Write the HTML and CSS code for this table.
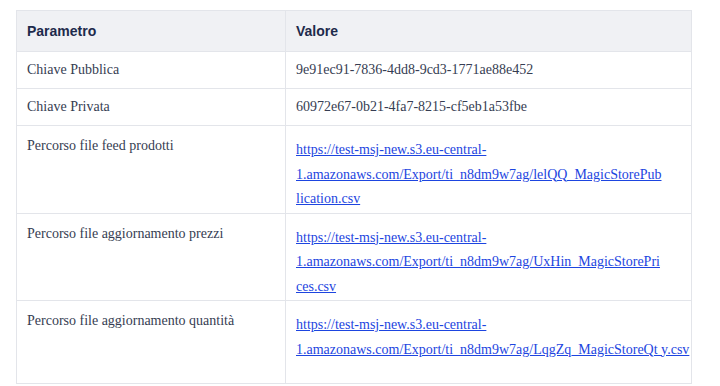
FILE: index.html
```html
<!DOCTYPE html>
<html lang="it">
<head>
    <meta charset="UTF-8">
    <meta name="viewport" content="width=device-width, initial-scale=1.0">
    <title>Parametri</title>
    <link rel="stylesheet" href="styles.css">
</head>
<body>
    <table class="params">
        <thead>
            <tr>
                <th class="col-name">Parametro</th>
                <th>Valore</th>
            </tr>
        </thead>
        <tbody>
            <tr>
                <td>Chiave Pubblica</td>
                <td>9e91ec91-7836-4dd8-9cd3-1771ae88e452</td>
            </tr>
            <tr>
                <td>Chiave Privata</td>
                <td>60972e67-0b21-4fa7-8215-cf5eb1a53fbe</td>
            </tr>
            <tr class="link-row">
                <td>Percorso file feed prodotti</td>
                <td class="link-cell"><a href="#">https://test-msj-new.s3.eu-central-1.amazonaws.com/Export/ti_n8dm9w7ag/lelQQ_MagicStorePublication.csv</a></td>
            </tr>
            <tr class="link-row">
                <td>Percorso file aggiornamento prezzi</td>
                <td class="link-cell"><a href="#">https://test-msj-new.s3.eu-central-1.amazonaws.com/Export/ti_n8dm9w7ag/UxHin_MagicStorePrices.csv</a></td>
            </tr>
            <tr class="link-row last">
                <td>Percorso file aggiornamento quantità</td>
                <td class="link-cell"><a href="#">https://test-msj-new.s3.eu-central-<span class="nowrap">1.amazonaws.com/Export/ti_n8dm9w7ag/LqgZq_MagicStoreQt y.csv</span></a></td>
            </tr>
        </tbody>
    </table>
</body>
</html>
```

FILE: styles.css
```css
body {
    margin: 10px 16px;
    background-color: #ffffff;
}
.params {
    width: 676px;
    border-collapse: collapse;
    table-layout: fixed;
    font-family: 'Liberation Serif', serif;
    font-size: 14px;
    color: #363d52;
}
.params th,
.params td {
    border: 1px solid #e3e5ea;
    padding: 6px 10px;
    text-align: left;
    vertical-align: top;
    line-height: 24px;
}
.params th {
    background-color: #f0f1f4;
    font-family: 'Liberation Sans', sans-serif;
    font-weight: bold;
    color: #1d2a4b;
    padding: 8px 10px;
}
.params .col-name {
    width: 248px;
}
.link-cell {
    overflow-wrap: anywhere;
}
.link-row td {
    padding-top: 8px;
}
.link-row .link-cell {
    padding-top: 12px;
    padding-bottom: 1px;
    padding-right: 29px;
    line-height: 24.5px;
}
.link-row.last td {
    height: 68px;
}
.link-cell a {
    color: #1d45e0;
    text-decoration: underline;
}
.nowrap {
    white-space: nowrap;
}
```
